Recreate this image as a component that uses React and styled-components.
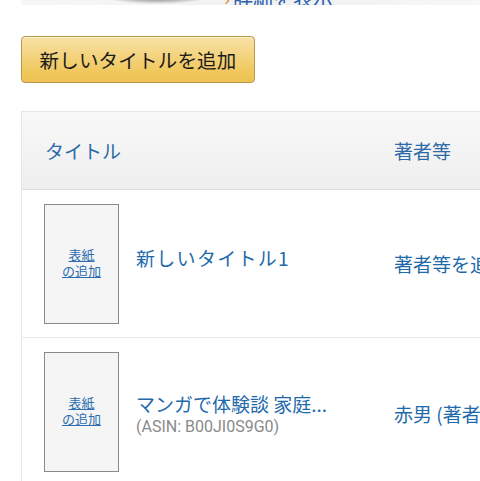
import React from "react";
import styled, { createGlobalStyle } from "styled-components";

const Global = createGlobalStyle`
  html, body { margin: 0; padding: 0; background: #fff; }
  body { overflow: hidden; width: 480px; height: 481px; font-family: "Noto Sans CJK JP", "Noto Sans", sans-serif; }
`;

const Page = styled.div`
  display: flex;
  flex-direction: column;
  padding-left: 21px;
`;

const TopStrip = styled.div`
  height: 5px;
  overflow: hidden;
  background: linear-gradient(to right, #f6f6f6, #f1f1f1 60%, #f7f7f7);
  position: relative;
`;

const Shadow = styled.div`
  position: absolute;
  left: 76px;
  top: -18px;
  width: 120px;
  height: 22px;
  border-radius: 50%;
  background: radial-gradient(ellipse at center, #777 0%, #999 40%, rgba(200,200,200,0) 72%);
`;

const TopLink = styled.span`
  position: absolute;
  left: 203px;
  bottom: -3px;
  font-size: 20px;
  line-height: 20px;
  color: #2a5fae;
  white-space: nowrap;
  &::before { content: "›"; color: #e08a2a; margin-right: 3px; }
`;

const AddButton = styled.button`
  margin-top: 31px;
  align-self: flex-start;
  width: 234px;
  height: 47px;
  border: 1px solid #b8974a;
  border-radius: 4px;
  background: linear-gradient(to bottom, #f8e1a7, #f0c75a 80%, #eec252);
  box-shadow: inset 0 1px 0 rgba(255,255,255,0.5);
  font-family: "Noto Sans CJK JP", sans-serif;
  font-size: 19.5px;
  color: #1b1b1b;
  padding: 0;
  display: flex;
  align-items: center;
  justify-content: center;
  letter-spacing: 0.2px;
`;

const Table = styled.div`
  margin-top: 28px;
  border-top: 1px solid #e6e6e6;
  border-left: 1px solid #e6e6e6;
  width: 520px;
`;

const HeaderRow = styled.div`
  display: grid;
  grid-template-columns: 350px 1fr;
  height: 77px;
  align-items: center;
  background: linear-gradient(to bottom, #f8f8f8, #efefef);
  border-bottom: 1px solid #dcdcdc;
`;

const HeadCell = styled.div`
  padding-left: ${(p) => p.$pad}px;
  font-size: 19px;
  color: #2c6aa8;
  white-space: nowrap;
  padding-bottom: 1px;
`;

const Row = styled.div`
  display: grid;
  grid-template-columns: 350px 1fr;
  height: 147px;
  align-items: center;
  border-bottom: 1px solid #e8e8e8;
`;

const TitleCell = styled.div`
  display: flex;
  align-items: center;
  gap: 17px;
  padding-left: 22px;
`;

const Cover = styled.div`
  width: 75px;
  height: 120px;
  box-sizing: border-box;
  border: 1px solid #8a8a8a;
  background: #f5f5f5;
  display: flex;
  align-items: center;
  justify-content: center;
  flex-shrink: 0;
`;

const CoverLink = styled.a`
  font-size: 13px;
  line-height: 16px;
  color: #2d6db0;
  text-decoration: underline;
  text-align: center;
  margin-top: -2px;
`;

const TitleBlock = styled.div`
  display: flex;
  flex-direction: column;
  margin-top: ${(p) => p.$mt || 0}px;
`;

const TitleLink = styled.a`
  font-size: 19px;
  line-height: 24px;
  color: #1f6aab;
  white-space: nowrap;
  letter-spacing: ${(p) => p.$ls || 0}px;
`;

const Asin = styled.span`
  font-family: Roboto, "Noto Sans", sans-serif;
  font-size: 16px;
  line-height: 22px;
  color: #8a8a8a;
`;

const AuthorCell = styled.div`
  padding-left: 22px;
  font-size: 19px;
  color: #1f6aab;
  white-space: nowrap;
  margin-top: ${(p) => p.$mt || 0}px;
`;

export default function App() {
  return (
    <>
      <Global />
      <Page>
        <TopStrip>
          <Shadow />
          <TopLink>詳細を表示</TopLink>
        </TopStrip>
        <AddButton>新しいタイトルを追加</AddButton>
        <Table>
          <HeaderRow>
            <HeadCell $pad={23}>タイトル</HeadCell>
            <HeadCell $pad={22}>著者等</HeadCell>
          </HeaderRow>
          <Row>
            <TitleCell>
              <Cover>
                <CoverLink>表紙<br />の追加</CoverLink>
              </Cover>
              <TitleBlock $mt={-12}>
                <TitleLink $ls={1.3}>新しいタイトル1</TitleLink>
              </TitleBlock>
            </TitleCell>
            <AuthorCell $mt={0}>著者等を追加</AuthorCell>
          </Row>
          <Row>
            <TitleCell>
              <Cover>
                <CoverLink>表紙<br />の追加</CoverLink>
              </Cover>
              <TitleBlock $mt={6}>
                <TitleLink>マンガで体験談 家庭...</TitleLink>
                <Asin>(ASIN: B00JI0S9G0)</Asin>
              </TitleBlock>
            </TitleCell>
            <AuthorCell $mt={4}>赤男 (著者)</AuthorCell>
          </Row>
        </Table>
      </Page>
    </>
  );
}
